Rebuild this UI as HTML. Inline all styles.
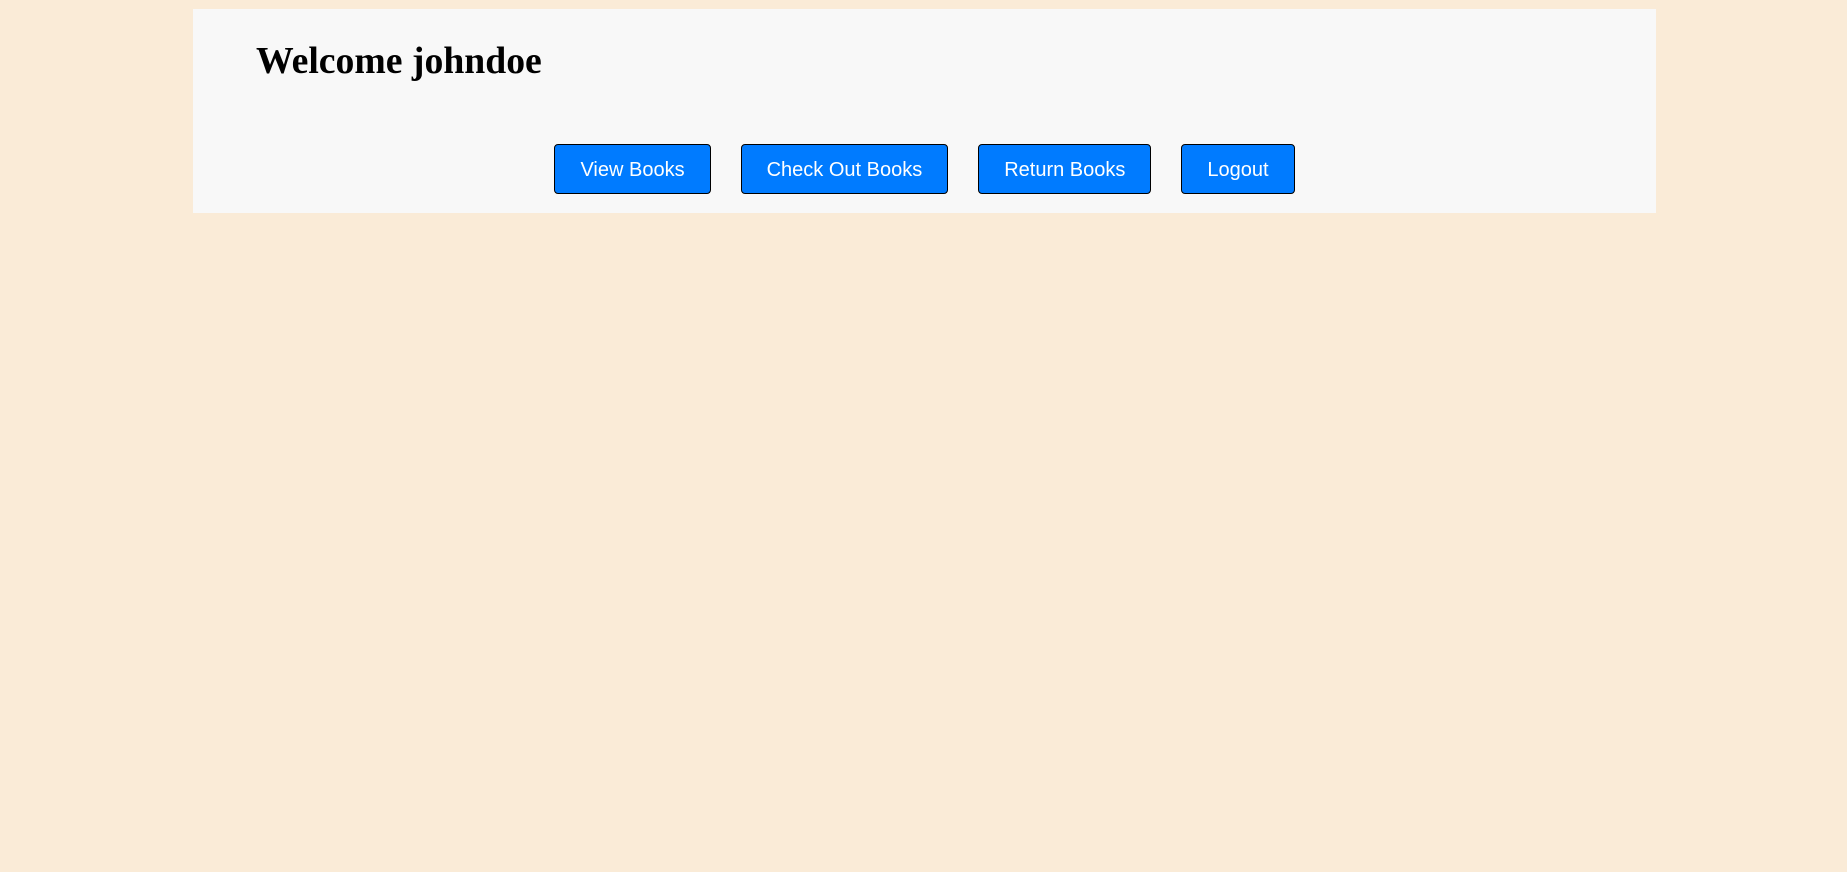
<!DOCTYPE html>
<html><head><meta charset="utf-8"><style>
html,body{margin:0;padding:0;background:#faebd7;width:1847px;height:872px;overflow:hidden}
.panel{position:absolute;left:193px;top:9px;width:1463px;height:204px;background:#f8f8f8}
h1{position:absolute;left:256px;top:39px;margin:0;font:bold 37.7px/44px "Liberation Serif",serif;color:#000}
.btns{position:absolute;left:193px;width:1463px;top:144px;text-align:center;font-size:0}
.b{display:inline-block;box-sizing:border-box;height:50px;padding:0 25px;margin:0 15px;background:#007bff;color:#fff;border:1px solid #000;border-radius:4px;font:20px/50px "Liberation Sans",sans-serif;vertical-align:top}
</style></head><body>
<div class="panel"></div>
<h1>Welcome johndoe</h1>
<div class="btns"><span class="b">View Books</span><span class="b">Check Out Books</span><span class="b">Return Books</span><span class="b">Logout</span></div>
</body></html>
